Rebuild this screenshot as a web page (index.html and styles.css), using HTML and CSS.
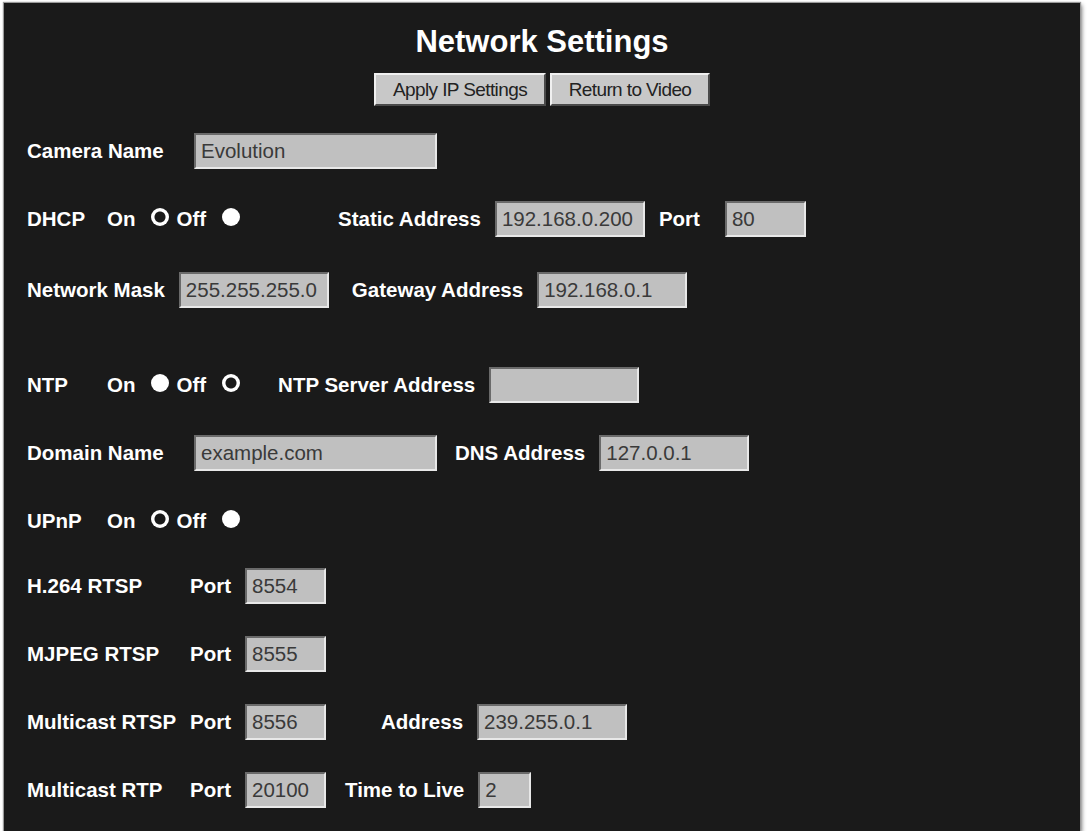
FILE: index.html
```html
<!DOCTYPE html>
<html lang="en">
<head>
    <meta charset="UTF-8">
    <meta name="viewport" content="width=device-width, initial-scale=1.0">
    <title>Network Settings</title>
    <link rel="stylesheet" href="styles.css">
</head>
<body>
    <div class="panel">
        <h1>Network Settings</h1>
        <div class="actions">
            <button type="button" class="btn-apply">Apply IP Settings</button>
            <button type="button" class="btn-video">Return to Video</button>
        </div>
        <form class="settings">
            <div class="row">
                <label class="lbl name-lbl" for="camname">Camera Name</label>
                <input class="txt w-long" id="camname" value="Evolution">
            </div>
            <div class="row">
                <span class="lbl switch-lbl">DHCP</span>
                <span class="toggle">
                    <label>On <input type="radio" name="dhcp" checked></label>
                    <label>Off <input type="radio" name="dhcp"></label>
                </span>
                <label class="lbl static-lbl" for="ip">Static Address</label>
                <input class="txt w-ip" id="ip" value="192.168.0.200">
                <label class="lbl" for="httpport">Port</label>
                <input class="txt w-port dhcp-port" id="httpport" value="80">
            </div>
            <div class="row mask-row">
                <label class="lbl" for="mask">Network Mask</label>
                <input class="txt w-ip" id="mask" value="255.255.255.0">
                <label class="lbl gw-lbl" for="gw">Gateway Address</label>
                <input class="txt w-ip" id="gw" value="192.168.0.1">
            </div>
            <div class="row ntp-row">
                <span class="lbl switch-lbl">NTP</span>
                <span class="toggle">
                    <label>On <input type="radio" name="ntp"></label>
                    <label>Off <input type="radio" name="ntp" checked></label>
                </span>
                <label class="lbl server-lbl" for="ntpserver">NTP Server Address</label>
                <input class="txt w-ip" id="ntpserver" value="">
            </div>
            <div class="row">
                <label class="lbl name-lbl" for="domain">Domain Name</label>
                <input class="txt w-long" id="domain" value="example.com">
                <label class="lbl dns-lbl" for="dns">DNS Address</label>
                <input class="txt w-ip" id="dns" value="127.0.0.1">
            </div>
            <div class="row">
                <span class="lbl switch-lbl">UPnP</span>
                <span class="toggle">
                    <label>On <input type="radio" name="upnp" checked></label>
                    <label>Off <input type="radio" name="upnp"></label>
                </span>
            </div>
            <div class="row stream-first">
                <span class="lbl stream-lbl">H.264 RTSP</span>
                <label class="lbl" for="h264port">Port</label>
                <input class="txt w-port" id="h264port" value="8554">
            </div>
            <div class="row">
                <span class="lbl stream-lbl">MJPEG RTSP</span>
                <label class="lbl" for="mjpegport">Port</label>
                <input class="txt w-port" id="mjpegport" value="8555">
            </div>
            <div class="row">
                <span class="lbl stream-lbl">Multicast RTSP</span>
                <label class="lbl" for="mcport">Port</label>
                <input class="txt w-port" id="mcport" value="8556">
                <label class="lbl addr-lbl" for="mcaddr">Address</label>
                <input class="txt w-ip" id="mcaddr" value="239.255.0.1">
            </div>
            <div class="row">
                <span class="lbl stream-lbl">Multicast RTP</span>
                <label class="lbl" for="rtpport">Port</label>
                <input class="txt w-port" id="rtpport" value="20100">
                <label class="lbl ttl-lbl" for="ttl">Time to Live</label>
                <input class="txt w-ttl" id="ttl" value="2">
            </div>
        </form>
    </div>
</body>
</html>
```

FILE: styles.css
```css
body {
    margin: 0;
    padding: 3px 0 0 4px;
    background-color: #fff;
    font-family: "Liberation Sans", Arial, sans-serif;
}
.panel {
    width: 1076px;
    height: 828px;
    box-sizing: border-box;
    padding: 21px 0 0 23px;
    background-color: #1a1a1a;
    color: #fff;
    box-shadow: 0 0 1px 1px #9a9a9a, 2px 2px 4px rgba(0, 0, 0, 0.5);
}
h1 {
    margin: 0 0 0 -23px;
    font-size: 31px;
    line-height: 36px;
    text-align: center;
}
.actions {
    display: flex;
    justify-content: center;
    gap: 4px;
    margin: 13px 0 0 -23px;
}
.actions button {
    height: 33px;
    padding: 0;
    font-family: inherit;
    font-size: 19px;
    letter-spacing: -0.6px;
    color: #222;
    background-color: #c8c8c8;
    border: 2px solid;
    border-color: #f0f0f0 #4a4a4a #4a4a4a #f0f0f0;
}
.btn-apply {
    width: 172px;
}
.btn-video {
    width: 160px;
}
.settings {
    margin-top: 11px;
}
.row {
    display: flex;
    align-items: center;
    height: 68px;
    font-size: 20.5px;
}
.row > * + * {
    margin-left: 14px;
}
.mask-row {
    margin-top: 3px;
}
.ntp-row {
    margin-top: 27px;
}
.stream-first {
    margin-top: -3px;
}
.lbl {
    font-weight: bold;
    white-space: nowrap;
}
.name-lbl {
    width: 153px;
}
.switch-lbl {
    width: 66px;
}
.stream-lbl {
    width: 149px;
}
.static-lbl {
    margin-left: 98px;
}
.server-lbl {
    margin-left: 38px;
}
.gw-lbl {
    margin-left: 23px;
}
.dns-lbl {
    margin-left: 18px;
}
.addr-lbl {
    margin-left: 55px;
}
.ttl-lbl {
    margin-left: 19px;
}
.row .dhcp-port {
    margin-left: 25px;
}

/* On / Off radio pairs */
.toggle {
    display: flex;
    align-items: center;
}
.toggle label {
    display: flex;
    align-items: center;
    gap: 16px;
    font-weight: bold;
}
.toggle label + label {
    margin-left: 7px;
}
.toggle input {
    appearance: none;
    width: 18px;
    height: 18px;
    margin: 0 0 4px 0;
    border-radius: 50%;
    background: #fff;
}
.toggle input:checked {
    background: radial-gradient(circle, #1a1a1a 5px, #fff 6px);
}

/* text boxes */
.txt {
    box-sizing: border-box;
    height: 36px;
    padding: 0 0 0 5px;
    font-family: inherit;
    font-size: 20.5px;
    color: #3a3a3a;
    background-color: #c0c0c0;
    border: 2px solid;
    border-color: #6a6a6a #e8e8e8 #e8e8e8 #6a6a6a;
}
.w-long {
    width: 243px;
}
.w-ip {
    width: 150px;
}
.w-port {
    width: 81px;
}
.w-ttl {
    width: 53px;
}
```
